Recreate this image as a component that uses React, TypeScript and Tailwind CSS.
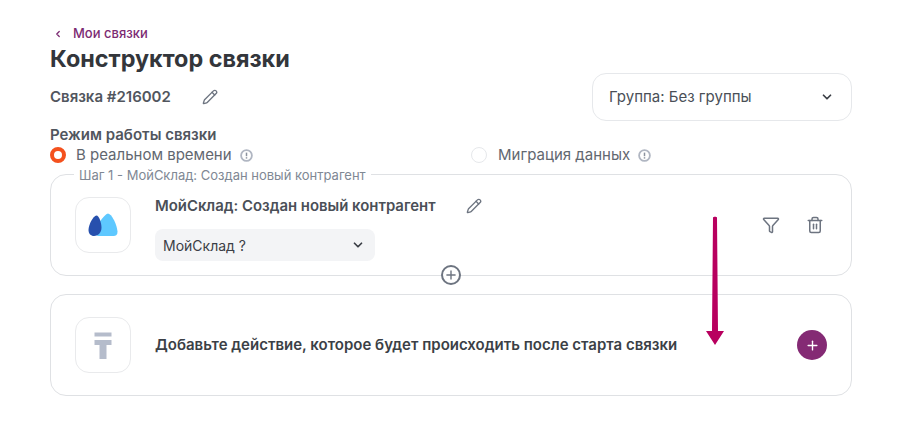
import {ChevronDown, ChevronLeft, Funnel, Pencil, Plus, Trash2} from 'lucide-react';

function Logo() {
  return (
    <svg width="30" height="24" viewBox="0 0 30 24" fill="none">
      <path d="M20 0.5C16 1.5 8 13 7 18.5C6.6 21.5 8.5 23 11 23H25.5C28 23 29.7 21.5 29.5 18.5C29 12 24 1 20 0.5Z" fill="#5ec8ff" />
      <path d="M8.5 2.5C5 3 0.5 12 0.5 17C0.5 20.8 2.8 23 6 23C10.5 23 13.5 19 13.5 14.5C13.5 10 11 2.5 8.5 2.5Z" fill="#2750ad" />
    </svg>
  );
}

function Hint() {
  return (
    <svg width="13" height="13" viewBox="0 0 13 13" fill="none" className="block">
      <circle cx="6.5" cy="6.5" r="5.4" stroke="#b0b6c2" strokeWidth="1.8" />
      <path d="M6.5 3.6V7.2" stroke="#8a919d" strokeWidth="1.5" />
      <path d="M6.5 8.2V9.6" stroke="#8a919d" strokeWidth="1.5" />
    </svg>
  );
}

export default function App() {
  return (
    <div className="relative h-[431px] w-[914px] overflow-hidden bg-white pl-[50px] pr-[62px] pt-[25px] font-['Inter',sans-serif] text-[#3b3f46]">
      <div className="flex h-[18px] items-center text-[13px] font-medium text-[#7c2a72]">
        <ChevronLeft size={10} strokeWidth={3} className="ml-[3px] mr-[10px]" />
        Мои связки
      </div>
      <h1 className="mt-[1px] h-[29px] text-[23.4px] font-bold leading-[30px] text-[#33363b]">Конструктор связки</h1>

      <div className="flex items-start justify-between">
        <div className="flex h-[48px] items-center">
          <span className="text-[15px] font-semibold text-[#51565e]">Связка #216002</span>
          <Pencil size={16} strokeWidth={2} className="ml-[31px] text-[#6d7480]" />
        </div>
        <div className="flex h-[48px] w-[260px] items-center justify-between rounded-[14px] border border-[#e6e8eb] pl-[16px] pr-[17px] text-[15px] text-[#4a4f57]">
          Группа: Без группы
          <ChevronDown size={14} strokeWidth={3} className="text-[#3b3f46]" />
        </div>
      </div>

      <div className="mt-[5px] h-[18px] text-[15px] font-semibold leading-[18px] text-[#51565e]">Режим работы связки</div>
      <div className="mt-[2px] flex h-[18px] items-center text-[15px] text-[#62676f]">
        <div className="flex w-[421px] items-center">
          <span className="h-[16px] w-[16px] rounded-full border-[4px] border-[#f4511e] bg-white" />
          <span className="ml-[10px]">В реальном времени</span>
          <span className="ml-[8px]"><Hint /></span>
        </div>
        <span className="h-[16px] w-[16px] rounded-full border border-[#e6e8eb] bg-white" />
        <span className="ml-[11px]">Миграция данных</span>
        <span className="ml-[8px]"><Hint /></span>
      </div>

      <div className="relative mt-[10px] flex h-[102px] items-start rounded-[16px] border border-[#dfe1e4] pl-[24px] pr-[27px] pt-[22px]">
        <span className="absolute left-[23px] top-[-8px] bg-white px-[5px] text-[13px] leading-[16px] text-[#808894]">
          Шаг 1 - МойСклад: Создан новый контрагент
        </span>
        <div className="flex h-[56px] w-[56px] items-center justify-center rounded-[14px] border border-[#e9eaec]">
          <Logo />
        </div>
        <div className="ml-[24px] mt-[-1px]">
          <div className="flex h-[20px] items-center">
            <span className="text-[14.9px] font-semibold text-[#4a4f57]">МойСклад: Создан новый контрагент</span>
            <Pencil size={16} strokeWidth={2} className="ml-[30px] text-[#6d7480]" />
          </div>
          <div className="mt-[13px] flex h-[32px] w-[220px] items-center justify-between rounded-[8px] bg-[#f3f4f6] pl-[8px] pr-[10px] text-[14px] text-[#3b3f46]">
            МойСклад ?
            <ChevronDown size={14} strokeWidth={3} className="text-[#3b3f46]" />
          </div>
        </div>
        <div className="ml-auto mt-[19px] flex items-center gap-[26px] text-[#6d7480]">
          <Funnel size={18} strokeWidth={2} />
          <Trash2 size={18} strokeWidth={2} />
        </div>
        <span className="absolute bottom-[-10px] left-[390px] flex h-[20px] w-[20px] items-center justify-center rounded-full border-2 border-[#6d7480] bg-white text-[#6d7480]">
          <Plus size={14} strokeWidth={2.4} />
        </span>
      </div>

      <div className="mt-[18px] flex h-[102px] items-center rounded-[16px] border border-[#dfe1e4] pl-[24px] pr-[24px]">
        <div className="flex h-[56px] w-[56px] items-center justify-center rounded-[14px] border border-[#e9eaec]">
          <svg width="18" height="27" viewBox="0 0 18 27" fill="#b5bccb">
            <rect x="0.5" y="0.5" width="17" height="4" />
            <rect x="0.5" y="8" width="17" height="5" />
            <rect x="5.5" y="8" width="7" height="19" />
          </svg>
        </div>
        <span className="ml-[24px] text-[15px] font-semibold text-[#3b3f46]">
          Добавьте действие, которое будет происходить после старта связки
        </span>
        <span className="ml-auto flex h-[30px] w-[30px] items-center justify-center rounded-full bg-[#842a74] text-white">
          <Plus size={15} strokeWidth={2.2} />
        </span>
      </div>

      <svg className="absolute left-[705px] top-[216px]" width="20" height="130" viewBox="0 0 20 130" fill="#b8005f">
        <path d="M8 1.5C8 0.4 12 0.4 12 1.5L13 115L19 115L10 129L1 115L7 115Z" />
      </svg>
    </div>
  );
}
